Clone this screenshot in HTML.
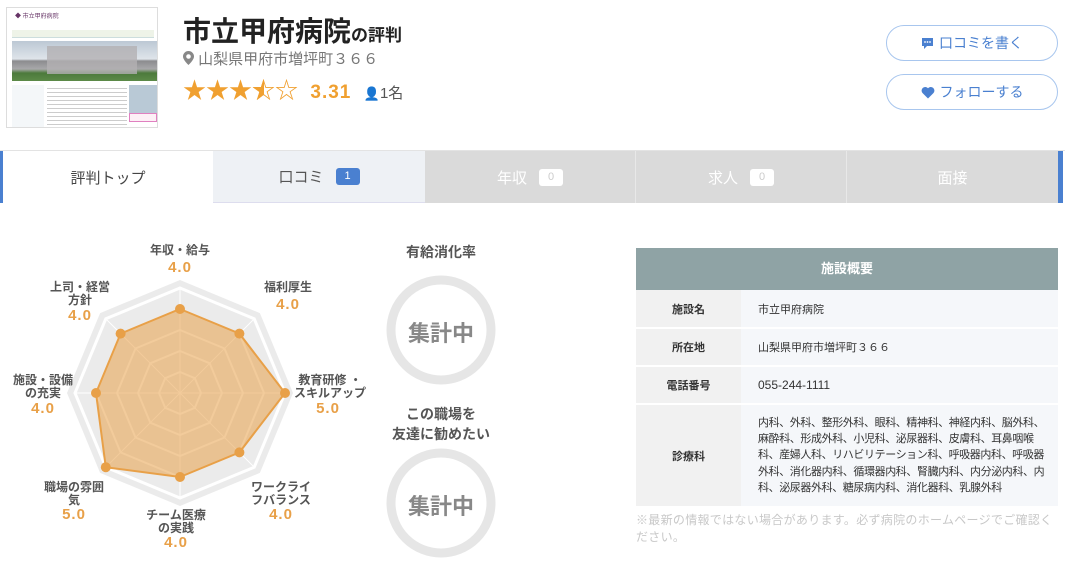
<!DOCTYPE html>
<html><head><meta charset="utf-8">
<style>
*{margin:0;padding:0;box-sizing:border-box}
body{width:1065px;height:569px;background:#fff;font-family:"Liberation Sans","Noto Sans CJK JP",sans-serif;position:relative;overflow:hidden;color:#333}
.a{position:absolute}
.lbl{position:absolute;font-size:12px;font-weight:bold;color:#555;text-align:center;line-height:13px;transform:translateX(-50%);white-space:nowrap}
.val{position:absolute;font-size:15px;font-weight:bold;color:#e8a048;transform:translateX(-50%);letter-spacing:1px}
.tab{position:absolute;top:151px;height:52px;font-size:15px;display:flex;align-items:center;justify-content:center}
.badge{display:inline-block;margin-left:12px;width:24px;height:17px;border-radius:3px;font-size:11px;line-height:17px;text-align:center}
.btn{position:absolute;left:886px;width:172px;height:36px;border:1.5px solid #a8c6ee;border-radius:18px;color:#4a80d0;font-size:14px;display:flex;align-items:center;justify-content:center;gap:5px}
table{border-collapse:collapse}
td{font-size:11px}
</style></head><body>

<div class="a" style="left:6px;top:7px;width:152px;height:121px;border:1px solid #ddd;background:#fff;overflow:hidden">
  <div class="a" style="left:8px;top:3px;font-size:6px;color:#636">◆ 市立甲府病院</div>
  <div class="a" style="left:5px;top:22px;width:142px;height:8px;background:#eef3e8;border-bottom:1px solid #cdd"></div>
  <div class="a" style="left:5px;top:33px;width:146px;height:40px;background:linear-gradient(#bcc8d4,#dfe4ea 45%,#8c8c8f 50%,#a8a8aa 70%,#4c7a3c 80%,#5c8a48)"></div>
  <div class="a" style="left:40px;top:38px;width:90px;height:28px;background:#b3b0b3;opacity:.8"></div>
  <div class="a" style="left:5px;top:77px;width:32px;height:42px;background:#f4f7f9"></div>
  <div class="a" style="left:40px;top:77px;width:80px;height:42px;background:repeating-linear-gradient(#fff 0 3px,#ccc 3px 4px)"></div>
  <div class="a" style="left:122px;top:77px;width:28px;height:28px;background:#b9c9d6"></div>
  <div class="a" style="left:122px;top:105px;width:28px;height:9px;border:1px solid #e080c0;background:#fdf0f6"></div>
</div>

<div class="a" style="left:183px;top:10px;font-size:28px;font-weight:bold;color:#222;white-space:nowrap">市立甲府病院<span style="font-size:17px">の評判</span></div>
<div class="a" style="left:183px;top:48px;font-size:15px;color:#777;white-space:nowrap">
<svg width="11" height="14" viewBox="0 0 11 14" style="vertical-align:-1px"><path d="M5.5 0A5.5 5.5 0 0 0 0 5.5C0 9 5.5 14 5.5 14S11 9 11 5.5A5.5 5.5 0 0 0 5.5 0zM5.5 3.2a2.3 2.3 0 1 1 0 4.6a2.3 2.3 0 0 1 0-4.6z" fill="#888"/></svg> 山梨県甲府市増坪町３６６</div>
<div class="a" style="left:183px;top:71px;font-size:23px;color:#f0a030;white-space:nowrap;letter-spacing:0px">★★★<span style="position:relative;display:inline-block">☆<span style="position:absolute;left:0;top:0;width:50%;overflow:hidden">★</span></span>☆
<span style="font-size:19px;font-weight:bold;margin-left:6px;letter-spacing:1px">3.31</span>
<span style="font-size:15px;color:#555;margin-left:6px;letter-spacing:0"><span style="color:#4a80d0;font-size:13px">👤</span>1名</span></div>

<div class="btn" style="top:25px"><svg width="13" height="13" viewBox="0 0 13 13"><path d="M1 1h11v8H6l-3 3V9H1z" fill="#4a80d0"/><circle cx="4" cy="5" r=".9" fill="#fff"/><circle cx="6.5" cy="5" r=".9" fill="#fff"/><circle cx="9" cy="5" r=".9" fill="#fff"/></svg>口コミを書く</div>
<div class="btn" style="top:74px"><svg width="14" height="13" viewBox="0 0 14 13"><path d="M7 12.5L1.5 7A3.3 3.3 0 0 1 7 2.2A3.3 3.3 0 0 1 12.5 7z" fill="#4a80d0"/></svg>フォローする</div>

<div class="a" style="left:0;top:150px;width:1065px;height:1px;background:#e3e3e3"></div>
<div class="tab" style="left:0;width:213px;background:#fff;border-left:3px solid #4a80d0;color:#444">評判トップ</div>
<div class="tab" style="left:213px;width:212px;background:#eef1f5;color:#555;border-bottom:1px solid #dde">口コミ<span class="badge" style="background:#4a80d0;color:#fff">1</span></div>
<div class="tab" style="left:425px;width:211px;background:#dadada;color:#fff;border-right:1px solid #e8e8e8">年収<span class="badge" style="background:#fff;color:#ccc">0</span></div>
<div class="tab" style="left:636px;width:211px;background:#dadada;color:#fff;border-right:1px solid #e8e8e8">求人<span class="badge" style="background:#fff;color:#ccc">0</span></div>
<div class="tab" style="left:847px;width:211px;background:#dadada;color:#fff">面接</div>
<div class="a" style="left:1058px;top:151px;width:5px;height:52px;background:#4a80d0"></div>

<svg class="a" style="left:0;top:0" width="640" height="569">
<polygon points="180,280 259.9,313.1 293,393 259.9,472.9 180,506 100.1,472.9 67,393 100.1,313.1" fill="#ebebeb"/>
<g fill="none" stroke="#fff" stroke-width="2">
<polygon points="180,288 254.2,318.8 285,393 254.2,467.2 180,498 105.8,467.2 75,393 105.8,318.8" stroke-width="3"/>
<polygon points="180,309 239.4,333.6 264,393 239.4,452.4 180,477 120.6,452.4 96,393 120.6,333.6"/>
<polygon points="180,330 224.5,348.5 243,393 224.5,437.5 180,456 135.5,437.5 117,393 135.5,348.5"/>
<polygon points="180,351 209.7,363.3 222,393 209.7,422.7 180,435 150.3,422.7 138,393 150.3,363.3"/>
<polygon points="180,372 194.8,378.2 201,393 194.8,407.8 180,414 165.2,407.8 159,393 165.2,378.2"/>
<path d="M180 288V498M105.8 318.8L254.2 467.2M75 393H285M105.8 467.2L254.2 318.8" stroke-width="1"/>
</g>
<polygon points="180,309 239.4,333.6 285,393 239.4,452.4 180,477 105.8,467.2 96,393 120.6,333.6" fill="rgba(232,160,72,.55)" stroke="#e8a048" stroke-width="2"/>
<g fill="#e8a048"><circle cx="180" cy="309" r="5"/><circle cx="239.4" cy="333.6" r="5"/><circle cx="285" cy="393" r="5"/><circle cx="239.4" cy="452.4" r="5"/><circle cx="180" cy="477" r="5"/><circle cx="105.8" cy="467.2" r="5"/><circle cx="96" cy="393" r="5"/><circle cx="120.6" cy="333.6" r="5"/></g>
<circle cx="441" cy="330" r="50" fill="none" stroke="#e6e6e6" stroke-width="9"/>
<circle cx="441" cy="503" r="50" fill="none" stroke="#e6e6e6" stroke-width="9"/>
</svg>
<div class="lbl" style="left:180px;top:244px">年収・給与</div><div class="val" style="left:180px;top:259px">4.0</div>
<div class="lbl" style="left:288px;top:281px">福利厚生</div><div class="val" style="left:288px;top:296px">4.0</div>
<div class="lbl" style="left:80px;top:281px">上司・経営<br>方針</div><div class="val" style="left:80px;top:307px">4.0</div>
<div class="lbl" style="left:330px;top:374px">教育研修 ・<br>スキルアップ</div><div class="val" style="left:328px;top:400px">5.0</div>
<div class="lbl" style="left:43px;top:374px">施設・設備<br>の充実</div><div class="val" style="left:43px;top:400px">4.0</div>
<div class="lbl" style="left:281px;top:481px">ワークライ<br>フバランス</div><div class="val" style="left:281px;top:506px">4.0</div>
<div class="lbl" style="left:74px;top:481px">職場の雰囲<br>気</div><div class="val" style="left:74px;top:506px">5.0</div>
<div class="lbl" style="left:176px;top:509px">チーム医療<br>の実践</div><div class="val" style="left:176px;top:534px">4.0</div>

<div class="a" style="left:391px;top:242px;width:100px;text-align:center;font-size:14px;font-weight:bold;color:#555">有給消化率</div>
<div class="a" style="left:391px;top:316px;width:100px;text-align:center;font-size:22px;font-weight:bold;color:#888">集計中</div>
<div class="a" style="left:381px;top:404px;width:120px;text-align:center;font-size:14px;font-weight:bold;color:#555;line-height:20px">この職場を<br>友達に勧めたい</div>
<div class="a" style="left:391px;top:489px;width:100px;text-align:center;font-size:22px;font-weight:bold;color:#888">集計中</div>

<div class="a" style="left:636px;top:248px;width:422px">
<div style="height:42px;background:#8fa3a5;color:#fff;font-weight:bold;font-size:13px;text-align:center;line-height:42px">施設概要</div>
<table style="width:422px">
<tr style="height:38px"><td style="width:105px;background:#f1f1f1;text-align:center;font-weight:bold;border-bottom:2px solid #fff">施設名</td><td style="background:#f5f7fa;padding-left:17px;border-bottom:2px solid #fff">市立甲府病院</td></tr>
<tr style="height:38px"><td style="background:#f1f1f1;text-align:center;font-weight:bold;border-bottom:2px solid #fff">所在地</td><td style="background:#f5f7fa;padding-left:17px;border-bottom:2px solid #fff">山梨県甲府市増坪町３６６</td></tr>
<tr style="height:38px"><td style="background:#f1f1f1;text-align:center;font-weight:bold;border-bottom:2px solid #fff">電話番号</td><td style="background:#f5f7fa;padding-left:17px;border-bottom:2px solid #fff;font-size:12px">055-244-1111</td></tr>
<tr style="height:102px"><td style="background:#f1f1f1;text-align:center;font-weight:bold">診療科</td><td style="background:#f5f7fa;padding:0 10px 0 17px;line-height:16.3px;font-size:11px;letter-spacing:-0.4px">内科、外科、整形外科、眼科、精神科、神経内科、脳外科、麻酔科、形成外科、小児科、泌尿器科、皮膚科、耳鼻咽喉科、産婦人科、リハビリテーション科、呼吸器内科、呼吸器外科、消化器内科、循環器内科、腎臓内科、内分泌内科、内科、泌尿器外科、糖尿病内科、消化器科、乳腺外科</td></tr>
</table>
<div style="font-size:12px;color:#c8c8c8;line-height:17px;margin-top:6px;letter-spacing:0.3px">※最新の情報ではない場合があります。必ず病院のホームページでご確認ください。</div>
</div>
</body></html>
